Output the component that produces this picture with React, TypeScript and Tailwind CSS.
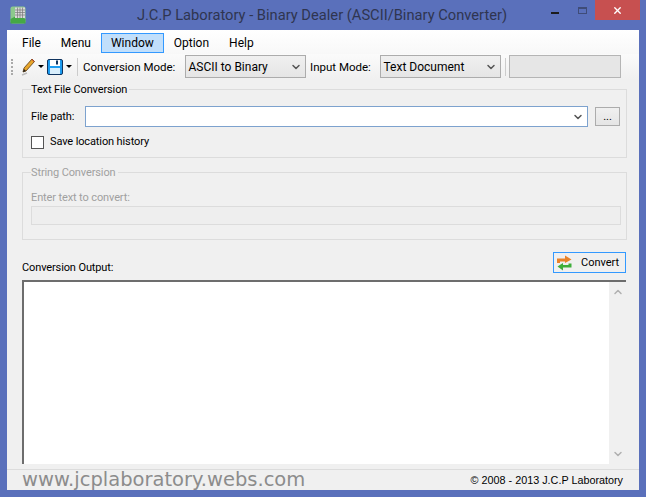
import { ChevronDown, ChevronUp, X } from "lucide-react";

const font = "font-['Roboto','Open_Sans',sans-serif]";

function AppIcon() {
  return (
    <svg width="16" height="18" viewBox="0 0 16 18">
      <rect x="0.5" y="0.5" width="15" height="17" rx="2" fill="#8cc98c" />
      <path d="M0.5 13 L8 9 L15.5 13 V17.5 H0.5 Z" fill="#45a845" />
      <path d="M5 1.5 H15 V12 H5 Z" fill="#d9d9d9" />
      <path d="M5 4 H15 M5 6.5 H15 M5 9 H15 M7.5 1.5 V12 M10 1.5 V12 M12.5 1.5 V12" stroke="#777" strokeWidth="0.7" />
    </svg>
  );
}

function PencilIcon() {
  return (
    <svg width="14" height="18" viewBox="0 0 14 18">
      <path d="M2 14 L3 10 L11 1 L13.5 3.5 L5 13 Z" fill="#e8a72c" stroke="#5b3a10" strokeWidth="0.8" />
      <path d="M10.5 1.5 L13 4 L13.5 3.5 L11 1 Z" fill="#c0392b" />
      <path d="M2 14 L3 11 L5 13 Z" fill="#222" />
      <path d="M1 17 L6 15" stroke="#bbb" strokeWidth="1.5" />
    </svg>
  );
}

function SaveIcon() {
  return (
    <svg width="16" height="16" viewBox="0 0 16 16">
      <rect x="0.5" y="0.5" width="15" height="15" rx="1.5" fill="#1d9cf0" stroke="#10345f" />
      <rect x="3" y="1" width="10" height="6" fill="#fff" />
      <rect x="9" y="1.5" width="2" height="4" fill="#10345f" />
      <rect x="3" y="9" width="10" height="6" fill="#d8eefc" />
    </svg>
  );
}

function ConvertIcon() {
  return (
    <svg width="15" height="16" viewBox="0 0 15 16">
      <path d="M0 8 V3.5 H8 V0.5 L14.5 4.5 L8 8 V6.5 H3 V8 Z" fill="#e8822a" />
      <path d="M14.5 8.5 V12.5 H6 V15.5 L0.5 11.5 L6 8 V10 H11.5 V8.5 Z" fill="#3fae3a" />
    </svg>
  );
}

function Caret() {
  return <span className="ml-[3px] h-0 w-0 border-x-[3px] border-t-[3px] border-x-transparent border-t-black" />;
}

function Select({ value }: { value: string }) {
  return (
    <div className="flex h-[23px] w-[121px] shrink-0 items-center justify-between border border-[#acacac] bg-gradient-to-b from-[#f0f0f0] to-[#e5e5e5] pl-[2.5px] pr-[3px] text-[12px]">
      <span>{value}</span>
      <ChevronDown size={12} strokeWidth={3} className="text-[#555]" />
    </div>
  );
}

export default function App() {
  const menus = [
    { label: "File", active: false },
    { label: "Menu", active: false },
    { label: "Window", active: true },
    { label: "Option", active: false },
    { label: "Help", active: false },
  ];

  return (
    <div className={`flex h-[497px] w-[646px] flex-col overflow-hidden bg-[#5a70bb] px-[7px] pb-[7px] text-[11px] leading-4 text-black ${font}`}>
      <div className="flex h-[30px] shrink-0 items-start">
        <div className="mt-[6px] w-[16px] shrink-0 -translate-x-[-3px]">
          <AppIcon />
        </div>
        <div className="mt-[5px] flex-1 pl-[70px] text-center text-[14.7px] leading-[20px] text-[#2f3550]">
          J.C.P Laboratory - Binary Dealer (ASCII/Binary Converter)
        </div>
        <div className="flex shrink-0 items-start">
          <div className="mr-[19px] mt-[12px] h-[2px] w-[8px] bg-[#1c1c1c]" />
          <div className="mr-[8px] mt-[7px] h-[7px] w-[9px] border border-[#3f4c78] border-t-2" />
          <div className="-mr-[1px] flex h-[20px] w-[45px] items-center justify-center bg-[#c75050]">
            <X size={11} strokeWidth={3} className="text-white" />
          </div>
        </div>
      </div>

      <div className="flex min-h-0 flex-1 flex-col bg-[#f0f0f0]">
        <div className="flex h-[24px] shrink-0 items-center bg-gradient-to-b from-[#ffffff] to-[#f8f8f8] pl-[5px] pt-[1px] text-[12px]">
          {menus.map((m) => (
            <div
              key={m.label}
              className={`flex h-[20px] items-center border px-[9px] ${m.active ? "border-[#3399ff] bg-[#c1dffb]" : "border-transparent"}`}
            >
              {m.label}
            </div>
          ))}
        </div>

        <div className="flex h-[25px] shrink-0 items-center bg-gradient-to-b from-[#fbfbfb] to-[#f0f0f0] pl-[4px]">
          <div className="mr-[8px] h-[16px] w-[2px] border-l-2 border-dotted border-[#aaa]" />
          <PencilIcon />
          <Caret />
          <div className="w-[3px]" />
          <SaveIcon />
          <Caret />
          <div className="ml-[5px] mr-[5px] h-[18px] w-px bg-[#ccc]" />
          <span className="w-[102px] shrink-0 text-[11.5px]">Conversion Mode:</span>
          <Select value="ASCII to Binary" />
          <span className="ml-[4px] w-[70px] shrink-0 text-[11.5px]">Input Mode:</span>
          <Select value="Text Document" />
          <div className="ml-[4px] mr-[3px] h-[18px] w-px bg-[#ccc]" />
          <div className="h-[23px] w-[112px] border border-[#b5b5b5] bg-[#e6e6e6]" />
        </div>

        <div className="flex min-h-0 flex-1 flex-col px-[15px] pt-[2px]">
          <fieldset className="mr-[-3px] h-[77px] shrink-0 border border-[#dcdcdc] pl-[8px] pr-[6px] tracking-[-0.12px]">
            <legend className="pl-0 pr-[2px] pt-[1px] leading-4">Text File Conversion</legend>
            <div className="mt-[8px] flex items-center">
              <span className="w-[54px]">File path:</span>
              <div className="flex h-[21px] flex-1 items-center justify-end border border-[#7da2ce] bg-white pr-[3px]">
                <ChevronDown size={12} strokeWidth={3} className="text-[#555]" />
              </div>
              <div className="ml-[7px] flex h-[19px] w-[25px] items-center justify-center border border-[#acacac] bg-gradient-to-b from-[#f0f0f0] to-[#e5e5e5]">
                ...
              </div>
            </div>
            <div className="mt-[7px] flex items-center">
              <div className="mr-[6px] h-[13px] w-[13px] border border-[#555] bg-white" />
              <span>Save location history</span>
            </div>
          </fieldset>

          <fieldset className="mr-[-3px] mt-[6px] h-[76px] shrink-0 border border-[#dcdcdc] pl-[8px] pr-[5px] tracking-[-0.12px] text-[#a0a0a0]">
            <legend className="pl-0 pr-[2px] pt-[1px] leading-4">String Conversion</legend>
            <div className="mt-[9px]">Enter text to convert:</div>
            <div className="h-[19px] border border-[#dcdcdc] bg-[#eeeeee]" />
          </fieldset>

          <div className="mr-[-2px] mt-[12px] flex shrink-0 items-end justify-between">
            <span className="mb-[-3px] tracking-[-0.12px]">Conversion Output:</span>
            <div className="flex h-[21px] w-[73px] items-center border border-[#3399ff] bg-[#f0f0f0] pl-[3px]">
              <ConvertIcon />
              <span className="ml-[9px]">Convert</span>
            </div>
          </div>

          <div className="mr-[-2px] mt-[7px] flex h-[184px] shrink-0 border-l-2 border-t-2 border-[#6d6d6d] bg-white">
            <div className="flex-1" />
            <div className="flex w-[17px] flex-col items-center justify-between bg-[#f0f0f0] py-[4px] text-[#b0b0b0]">
              <ChevronUp size={12} strokeWidth={3} />
              <ChevronDown size={12} strokeWidth={3} />
            </div>
          </div>
        </div>

        <div className="mt-[5px] flex h-[21px] shrink-0 items-center justify-between border-t border-[#dcdcdc] pl-[15px] pr-[16px]">
          <span className="font-['DejaVu_Sans',sans-serif] text-[19.5px] text-[#8c8c8c]">www.jcplaboratory.webs.com</span>
          <span className="font-['Liberation_Sans',sans-serif] text-[10.8px]">© 2008 - 2013 J.C.P Laboratory</span>
        </div>
      </div>
    </div>
  );
}
